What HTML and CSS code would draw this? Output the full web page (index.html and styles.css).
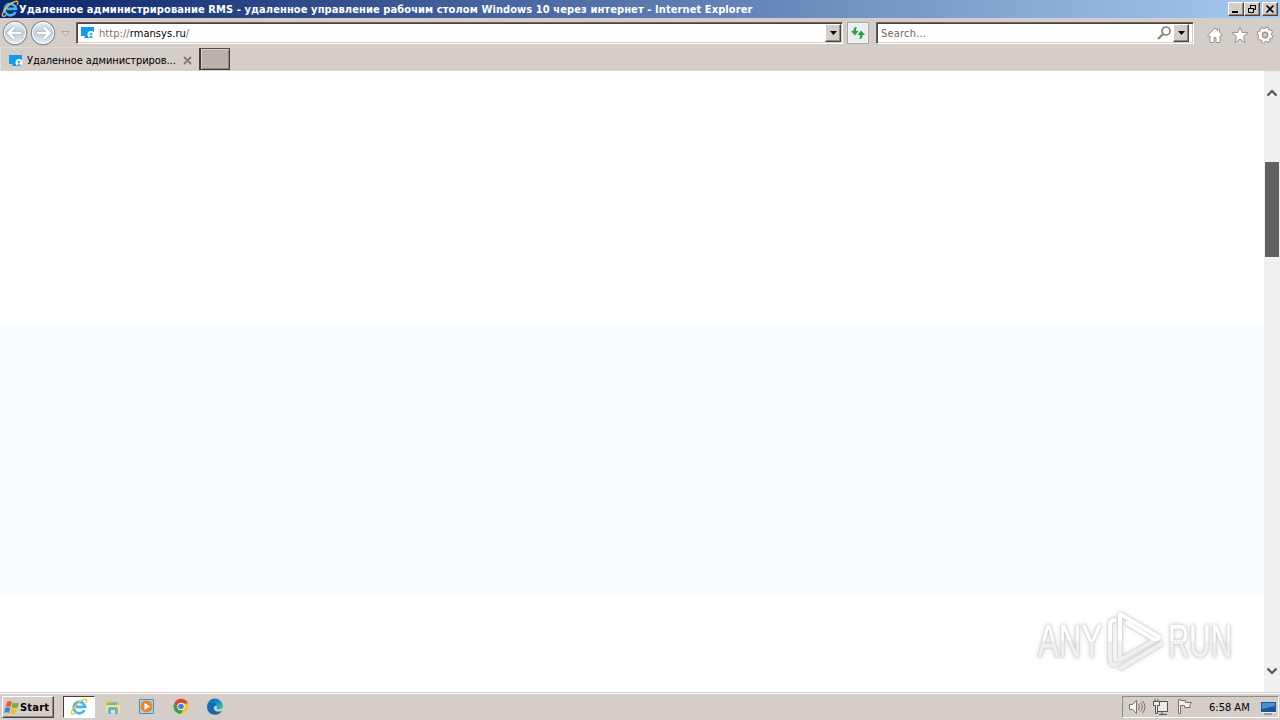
FILE: index.html
```
<!DOCTYPE html>
<html lang="ru">
<head>
  <meta charset="UTF-8">
  <title>Удаленное администрирование RMS</title>
  <link rel="stylesheet" href="styles.css">
</head>
<body>

  <svg class="defs" width="0" height="0">
    <defs>
      <linearGradient id="ball" x1="0" y1="0" x2="0" y2="1">
        <stop offset="0" stop-color="#edf1f5"/>
        <stop offset=".5" stop-color="#bccbdc"/>
        <stop offset="1" stop-color="#e8f3fa"/>
      </linearGradient>
      <linearGradient id="edge" x1="0" y1="0" x2="1" y2="1">
        <stop offset="0" stop-color="#1b5fa9"/>
        <stop offset=".5" stop-color="#168bd2"/>
        <stop offset="1" stop-color="#48cf8b"/>
      </linearGradient>
      <linearGradient id="fade" gradientUnits="userSpaceOnUse" x1="0" y1="0" x2="0" y2="66">
        <stop offset=".5" stop-color="#fff"/>
        <stop offset=".5" stop-color="#f0f0f0"/>
      </linearGradient>
      <symbol id="ie" viewBox="0 0 18 18">
        <path d="M14.500 12A5.700 5.700 0 1 1 15 8.900H5.500" fill="none" stroke="#45b5ed" stroke-width="2.700"/>
        <path d="M5 15.500C1 18 0 15 3.700 9.800 8.500 3.500 15.500-.500 16.700 2c.5 1-.2 2.200-.7 3" fill="none" stroke="#efc43b" stroke-width="1.300"/>
      </symbol>
      <symbol id="site" viewBox="0 0 14 14">
        <path d="M0 1h13v7H9v4H3l1-2H0z" fill="#139be9"/>
        <circle cx="10" cy="8.500" r="3.500" fill="#fff"/>
        <circle cx="10" cy="8" r="1.500" fill="#45b3ee"/>
        <path d="M8 12c0-3 4-3 4 0z" fill="#45b3ee"/>
      </symbol>
    </defs>
  </svg>

  <div class="titlebar">
    <svg class="ie-logo" width="18" height="18"><use href="#ie"/></svg>
    <span class="caption">Удаленное администрирование RMS - удаленное управление рабочим столом Windows 10 через интернет - Internet Explorer</span>
    <div class="window-buttons">
      <button><svg width="12" height="10"><path d="M2 8h6" stroke="#000" stroke-width="2"/></svg></button>
      <button><svg width="12" height="10"><path d="M4.500 4V1.500h5v4H8M4 1.500h6M2.500 4.500h5v4h-5zM2 4.500h6" fill="none" stroke="#000"/></svg></button>
      <button class="close"><svg width="12" height="10"><path d="M2.500 1.500l7 7M9.500 1.500l-7 7" stroke="#000" stroke-width="1.600"/></svg></button>
    </div>
  </div>

  <div class="toolbar">
    <div class="history">
      <svg width="74" height="28" fill="none">
        <circle cx="15" cy="14" r="11.700" fill="url(#ball)" stroke="#8d9197" stroke-width="1.200"/>
        <circle cx="15" cy="14" r="10.500" stroke="#fff"/>
        <path d="M9 14h12M14 8.500L8.500 14l5.500 5.500" stroke="#9eafc1" stroke-width="4"/>
        <path d="M9 14h12M14 8.500L8.500 14l5.500 5.500" stroke="#fff" stroke-width="2.600"/>
        <circle cx="43" cy="14" r="11.700" fill="url(#ball)" stroke="#8d9197" stroke-width="1.200"/>
        <circle cx="43" cy="14" r="10.500" stroke="#fff"/>
        <path d="M49 14H37M44 8.500l5.500 5.500-5.500 5.500" stroke="#9eafc1" stroke-width="4"/>
        <path d="M49 14H37M44 8.500l5.500 5.500-5.500 5.500" stroke="#fff" stroke-width="2.600"/>
        <path d="M61.500 12.500h8l-4 4z" fill="#dedad5" stroke="#aaa69f"/>
      </svg>
    </div>
    <div class="field address">
      <svg width="14" height="14"><use href="#site"/></svg>
      <span class="url"><i>http://</i>rmansys.ru<i>/</i></span>
      <button class="drop"><svg width="7" height="4"><path d="M0 0h7L3.500 4z"/></svg></button>
    </div>
    <button class="refresh">
      <svg width="16" height="16"><path d="M7 2C4 2 3.500 4 3.500 6H1l4 4.500L8.500 6H6c0-2 0-3 1-4zM9 14c3 0 3.500-2 3.500-4H15l-4-4.500L7.500 10H10c0 2 0 3-1 4z" fill="#319a42"/></svg>
    </button>
    <div class="field search">
      <span class="hint">Search...</span>
      <svg width="15" height="14" fill="none" stroke="#85817c"><circle cx="9" cy="5" r="4" stroke-width="1.700"/><path d="M6 8l-5 5" stroke-width="2.200"/></svg>
      <button class="drop"><svg width="7" height="4"><path d="M0 0h7L3.500 4z"/></svg></button>
    </div>
    <div class="tools">
      <svg width="18" height="18" fill="#fff" stroke="#97928d"><path d="M1.500 9.500L9 2l2.500 2.500V3h2v3.500l3 3-1.500 1-1-.8v6.800h-4v-5H8v5H4V9.700l-1 .8z"/></svg>
      <svg width="18" height="18" fill="#fff" stroke="#97928d"><path d="M9 1l2.200 5.500 5.800.4-4.500 3.700 1.500 5.900-5-3.300-5 3.300 1.500-5.900L1 6.900l5.800-.4z"/></svg>
      <svg width="18" height="18" fill="none"><circle cx="9" cy="9" r="6.900" stroke="#8d8883" stroke-width="3" stroke-dasharray="3.300 2.120"/><circle cx="9" cy="9" r="5" stroke="#8d8883" stroke-width="4.200"/><circle cx="9" cy="9" r="6.700" stroke="#fff" stroke-width="1.700" stroke-dasharray="2.200 3.060" stroke-dashoffset="-.5"/><circle cx="9" cy="9" r="4.800" stroke="#fff" stroke-width="2.800"/><circle cx="9" cy="9" r="2.500" fill="#d5cec8" stroke="#8d8883"/></svg>
    </div>
  </div>

  <div class="tabs">
    <div class="tab">
      <svg width="14" height="14"><use href="#site"/></svg>
      <span class="tab-title">Удаленное администриров...</span>
      <svg class="tab-close" width="9" height="9"><path d="M1 1l7 7M8 1L1 8" stroke="#817c78" stroke-width="1.800"/></svg>
    </div>
    <button class="new-tab"></button>
  </div>

  <div class="view">
    <div class="page">
      <div class="band"></div>
      <svg class="watermark" width="204" height="66">
        <text x="4" y="49" textLength="64" lengthAdjust="spacingAndGlyphs">ANY</text>
        <text x="134" y="49" textLength="64" lengthAdjust="spacingAndGlyphs">RUN</text>
        <g class="mark">
          <path d="M81 12q-5 0-5 5v34q0 6 5 6"/>
          <path d="M86 50V6l39 23M93 15l28 17"/>
          <path d="M86 30v22l39-22M87 60l40-24"/>
        </g>
      </svg>
    </div>
    <div class="scrollbar">
      <svg width="12" height="8"><path d="M1.500 6.500L6 2l4.500 4.500" fill="none" stroke="#555" stroke-width="2.200"/></svg>
      <div class="thumb"></div>
      <svg class="down" width="12" height="8"><path d="M1.500 1.500L6 6l4.500-4.500" fill="none" stroke="#555" stroke-width="2.200"/></svg>
    </div>
  </div>

  <div class="taskbar">
    <button class="start">
      <svg width="17" height="17"><path d="M4 3q3-2 5 0L7.500 8Q5 6.500 2.500 8z" fill="#e95c2d"/><path d="M10 3.500q3 1.500 6 0L14.500 8.500q-3 1.300-6-.2z" fill="#72af37"/><path d="M2.200 9q2.500-1.500 5 0L6 14q-2.500-1.700-5 0z" fill="#3b83cb"/><path d="M8.200 9.300q3 1.300 6 .2L13 14.300q-3 1.300-6 0z" fill="#f4bd2d"/></svg>
      <span>Start</span>
    </button>
    <div class="apps">
      <div class="app active"><svg width="18" height="18"><use href="#ie"/></svg></div>
      <div class="app">
        <svg width="18" height="18"><path d="M2 3l5-1 2 2h6v11H2z" fill="#e8c964"/><path d="M3 5l10-1v3H3z" fill="#78b896"/><path d="M2 7h14v8H2z" fill="#f5df91"/><path d="M4 16v-5q0-2 2-2h6q2 0 2 2v5h-3v-4H7v4z" fill="#65b2d4"/></svg>
      </div>
      <div class="app">
        <svg width="18" height="18"><path d="M1.500 1.500h14v14h-14z" fill="#a9d4ed" stroke="#4a8fb5"/><circle cx="8.500" cy="8.500" r="6" fill="#ed8527"/><path d="M6.500 5v7L12 8.500z" fill="#fff"/></svg>
      </div>
      <div class="app">
        <svg width="18" height="18"><circle cx="9" cy="8.500" r="7.500" fill="#f4c52f"/><path d="M2.500 4.700A7.500 7.500 0 0 1 16 5.500H9L6 10.500z" fill="#dc4436"/><path d="M2.500 4.700A7.500 7.500 0 0 0 8.500 16L12 10.500H6z" fill="#389e57"/><circle cx="9" cy="8.500" r="3.700" fill="#fff"/><circle cx="9" cy="8.500" r="2.800" fill="#4285db"/></svg>
      </div>
      <div class="app">
        <svg width="18" height="18"><path d="M1 9a8 8 0 0 1 16-1c0 3-3 4-6 3-1-.5 0-1 0-3 0-3-8-4-10 1z" fill="url(#edge)"/><path d="M1 9c1-5 9-6 10-1-2-1-4 1-3 3 1 3 5 3 8 2-3 5-14 6-15-4z" fill="#1766b3"/></svg>
      </div>
    </div>
    <div class="tray">
      <svg width="18" height="18" fill="#f5f3f1" stroke="#77716d"><path d="M1.500 6.500h3l4-4v13l-4-4h-3z"/><path d="M10.500 6q2 3 0 6M12.500 4.500q3.500 4.500 0 9M14.500 3q5 6 0 12" fill="none"/></svg>
      <svg width="18" height="18" fill="#eeeae6" stroke="#55504c"><path d="M5.500 3.500h10v10h-10zM10 14v2M7 16.500h8"/><path d="M1.500 3.500h6v4h-2v8h-2v-8h-2zM3 1v2.500M6 1v2.500"/></svg>
      <svg width="18" height="18" fill="#f5f3f1" stroke="#77716d"><path d="M2.500 15.500v-14h2v1h5v2h6l-2 3 1 2h-6v-2h-4v8z"/></svg>
      <span class="clock">6:58 AM</span>
      <svg width="17" height="15"><path d="M1 2h15v10H1z" fill="#1c559e"/><path d="M2 3h13v3L2 9z" fill="#4d90d0"/><path d="M1 12.500h15" stroke="#eaf4fc"/><path d="M4 14h8" stroke="#566476"/></svg>
    </div>
  </div>

</body>
</html>
```
FILE: styles.css
```
* {
  box-sizing: border-box;
}

body {
  margin: 0;
  width: 1280px;
  height: 720px;
  overflow: hidden;
  display: flex;
  flex-direction: column;
  font-family: "DejaVu Sans Condensed", "DejaVu Sans", sans-serif;
  font-stretch: condensed;
  font-size: 11px;
  color: #000;
  background-color: #d5cec8;
}

svg {
  display: block;
  flex: none;
}

.defs {
  position: absolute;
}

button {
  padding: 0;
  font: inherit;
  display: flex;
  align-items: center;
  justify-content: center;
  background-color: #d5cec8;
  border: 1px solid;
  border-color: #fff #48433f #48433f #fff;
  box-shadow: inset -1px -1px #918983;
}

.titlebar {
  height: 18px;
  flex: none;
  display: flex;
  align-items: center;
  padding: 0 2px 0 1px;
  background: linear-gradient(to right, #0a246a, #a6caf0);
}

.caption {
  color: #fff;
  font-weight: bold;
  letter-spacing: 0.092px;
  white-space: nowrap;
}

.window-buttons {
  display: flex;
  margin-left: auto;
}

.window-buttons button {
  width: 16px;
  height: 14px;
}

.window-buttons .close {
  margin-left: 2px;
}

.toolbar {
  height: 29px;
  flex: none;
  display: flex;
  align-items: flex-start;
  padding-top: 1px;
}

.history {
  width: 76px;
}

.field {
  height: 22px;
  margin-top: 3px;
  display: flex;
  align-items: center;
  background-color: #fff;
  border: 1px solid;
  border-color: #6c635c #fff #fff #6c635c;
  box-shadow: inset 1px 1px #48433f, inset -1px -1px #d5cec8;
}

.address {
  width: 767px;
  padding: 0 1px 0 4px;
}

.url {
  margin: 1px 0 0 4px;
  letter-spacing: 0.06px;
}

.url i {
  color: #77736f;
  font-style: normal;
}

.drop {
  width: 16px;
  height: 18px;
  margin-left: auto;
}

.refresh {
  width: 22px;
  height: 22px;
  margin: 3px 0 0 4px;
  background-color: #e9eef0;
  border: 1px solid #aaa6a2;
  box-shadow: inset 0 0 0 1px #f5f7f8;
}

.search {
  width: 318px;
  margin-left: 7px;
  padding: 0 4px;
}

.hint {
  margin: 1px auto 0 0;
  color: #6d6966;
  letter-spacing: 0.2px;
}

.search .drop {
  margin-left: 1px;
}

.tools {
  display: flex;
  gap: 7px;
  margin: 7px 0 0 12px;
}

.tabs {
  height: 24px;
  flex: none;
  display: flex;
  border-bottom: 1px solid #d8d3ce;
}

.tab {
  width: 198px;
  display: flex;
  align-items: center;
  padding: 3px 6px 0 8px;
  border-top: 1px solid #dfdad5;
  border-left: 1px solid #e5e1dd;
}

.tab-title {
  margin-left: 4px;
  letter-spacing: -0.08px;
  white-space: nowrap;
}

.tab-close {
  margin-left: auto;
}

.new-tab {
  width: 31px;
  height: 22px;
  margin: 1px 0 0 1px;
  background-color: #bbb2ad;
  border-color: #56504c #403b38 #403b38;
  border-left-width: 2px;
  box-shadow: inset 1px 1px #d7d0ca, inset -1px -1px #8f8782;
}

.view {
  height: 621px;
  flex: none;
  display: flex;
}

.page {
  width: 1264px;
  position: relative;
  padding-top: 253px;
  background-color: #fff;
}

.band {
  height: 273px;
  background-color: #f9fdff;
  border-top: 3px solid #fcfdfd;
}

.watermark {
  position: absolute;
  left: 1034px;
  top: 537px;
  fill: url(#fade);
  stroke: url(#fade);
  filter: drop-shadow(0 0 1px #bbb) drop-shadow(0 0 2px #ddd);
}

.watermark text {
  font: 47px "Liberation Sans", sans-serif;
  stroke-width: 0.5px;
}

.mark {
  fill: none;
  stroke-width: 4px;
  stroke-linejoin: round;
  stroke-linecap: round;
}

.scrollbar {
  width: 16px;
  display: flex;
  flex-direction: column;
  align-items: center;
  padding: 18px 0 17px;
  background-color: #efefef;
}

.thumb {
  width: 14px;
  height: 95px;
  margin-top: 65px;
  background-color: #606060;
}

.down {
  margin-top: auto;
}

.taskbar {
  height: 28px;
  flex: none;
  display: flex;
  align-items: center;
  padding: 1px 1px 0 2px;
  border-top: 1px solid #d5cec8;
  box-shadow: inset 0 1px #fff;
}

.start {
  width: 52px;
  height: 22px;
  justify-content: flex-start;
  font-weight: bold;
  letter-spacing: 0.2px;
}

.apps {
  display: flex;
  margin-left: 9px;
}

.app {
  width: 34px;
  height: 22px;
  display: flex;
  align-items: center;
  justify-content: center;
}

.active {
  width: 32px;
  margin-right: 1px;
  background-color: #fff;
  border: 1px solid;
  border-color: #48433f #fff #fff #48433f;
}

.tray {
  width: 157px;
  height: 22px;
  margin-left: auto;
  display: flex;
  align-items: center;
  gap: 6px;
  padding-left: 5px;
  border: 1px solid;
  border-color: #918983 #fff #fff #918983;
}

.clock {
  width: 45px;
  margin: 0 0 0 9px;
  white-space: nowrap;
}
```
